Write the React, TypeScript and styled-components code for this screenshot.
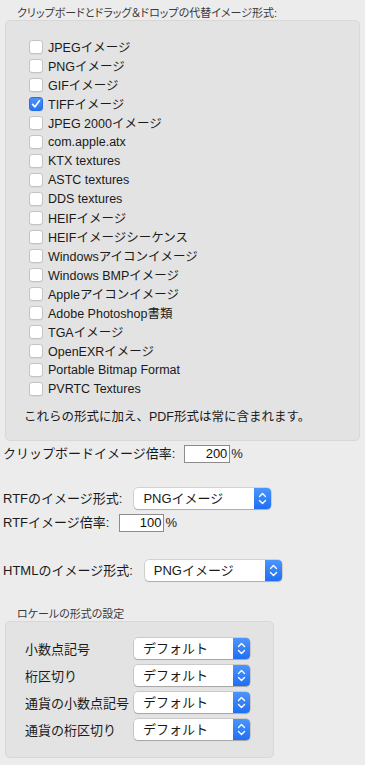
import React from "react";
import styled, { createGlobalStyle } from "styled-components";

const Global = createGlobalStyle`
  html, body { margin: 0; padding: 0; background: #ececec; }
  body { font-family: "Liberation Sans", "Noto Sans CJK JP", sans-serif; color: #1e1e1e; }
`;

const Page = styled.div`
  width: 365px;
  height: 765px;
  box-sizing: border-box;
  padding: 0 5px 0 3px;
  display: flex;
  flex-direction: column;
  background: #ececec;
  overflow: hidden;
`;

const GroupTitle = styled.div<{ $top: number }>`
  font-size: 11px;
  line-height: 14px;
  color: #3a3a3a;
  padding-left: 14px;
  margin-top: ${(p) => p.$top}px;
  font-feature-settings: "palt";
`;

const GroupBox = styled.div<{ $width?: number }>`
  margin-left: 2px;
  width: ${(p) => (p.$width ? `${p.$width}px` : "auto")};
  box-sizing: border-box;
  background: #e3e3e3;
  border: 1px solid #d8d8d8;
  border-radius: 5px;
`;

const FormatBox = styled(GroupBox)`
  padding: 16px 10px 15px 23px;
`;

const CheckList = styled.div`
  display: flex;
  flex-direction: column;
`;

const CheckRow = styled.label`
  display: flex;
  align-items: center;
  gap: 5px;
  height: 19px;
  font-size: 12.5px;
  color: #1a1a1a;
`;

const Box = styled.span<{ $checked: boolean }>`
  width: 14px;
  height: 14px;
  box-sizing: border-box;
  border-radius: 3px;
  display: flex;
  align-items: center;
  justify-content: center;
  background: ${(p) => (p.$checked ? "linear-gradient(#4c93fb, #2b74f1)" : "#fff")};
  border: 1px solid ${(p) => (p.$checked ? "#2a6fe0" : "#c4c4c4")};
  box-shadow: 0 0.5px 0.5px rgba(0, 0, 0, 0.08);
`;

const Note = styled.div`
  margin-top: 11px;
  margin-left: -5px;
  font-size: 12.5px;
  line-height: 16px;
  color: #1a1a1a;
`;

const FieldRow = styled.div<{ $top: number }>`
  display: flex;
  align-items: center;
  margin-top: ${(p) => p.$top}px;
  font-size: 13px;
  line-height: 18px;
  color: #1a1a1a;
`;

const FieldLabel = styled.span<{ $gap: number }>`
  margin-right: ${(p) => p.$gap}px;
  white-space: nowrap;
`;

const NumberBox = styled.div<{ $width: number }>`
  width: ${(p) => p.$width}px;
  height: 18px;
  box-sizing: border-box;
  background: #fff;
  border: 1px solid #8c8c8c;
  font-size: 13px;
  line-height: 16px;
  text-align: right;
  padding-right: 2px;
  color: #111;
`;

const Percent = styled.span`
  margin-left: 1px;
  font-size: 13px;
`;

const Popup = styled.div<{ $width: number }>`
  width: ${(p) => p.$width}px;
  height: 21px;
  box-sizing: border-box;
  display: flex;
  align-items: stretch;
  background: #fff;
  border-radius: 4px;
  box-shadow: 0 0 0 0.5px rgba(0, 0, 0, 0.22), 0 1px 1px rgba(0, 0, 0, 0.18);
  overflow: hidden;
`;

const PopupText = styled.span`
  flex: 1;
  padding-left: 9px;
  font-size: 13px;
  line-height: 21px;
  color: #1a1a1a;
  white-space: nowrap;
`;

const Stepper = styled.span`
  width: 17px;
  display: flex;
  align-items: center;
  justify-content: center;
  background: linear-gradient(#4b95fc, #1f6ff3);
`;

const LocaleBox = styled(GroupBox)`
  padding: 16px 0 17px 19px;
  display: grid;
  grid-template-columns: 109px 116px;
  row-gap: 6px;
  align-items: center;
`;

const LocaleLabel = styled.span`
  font-size: 13px;
  color: #1a1a1a;
  white-space: nowrap;
`;

const Check = () => (
  <svg width="10" height="10" viewBox="0 0 10 10">
    <path d="M1.6 5.4 L4 7.8 L8.4 1.8" fill="none" stroke="#fff" strokeWidth="1.7" strokeLinecap="round" strokeLinejoin="round" />
  </svg>
);

const Chevrons = () => (
  <svg width="9" height="13" viewBox="0 0 9 13">
    <path d="M1.5 4.5 L4.5 1.5 L7.5 4.5" fill="none" stroke="#fff" strokeWidth="1.4" strokeLinecap="round" strokeLinejoin="round" />
    <path d="M1.5 8.5 L4.5 11.5 L7.5 8.5" fill="none" stroke="#fff" strokeWidth="1.4" strokeLinecap="round" strokeLinejoin="round" />
  </svg>
);

const Select = ({ value, width }: { value: string; width: number }) => (
  <Popup $width={width}>
    <PopupText>{value}</PopupText>
    <Stepper>
      <Chevrons />
    </Stepper>
  </Popup>
);

const formats: [string, boolean][] = [
  ["JPEGイメージ", false],
  ["PNGイメージ", false],
  ["GIFイメージ", false],
  ["TIFFイメージ", true],
  ["JPEG 2000イメージ", false],
  ["com.apple.atx", false],
  ["KTX textures", false],
  ["ASTC textures", false],
  ["DDS textures", false],
  ["HEIFイメージ", false],
  ["HEIFイメージシーケンス", false],
  ["Windowsアイコンイメージ", false],
  ["Windows BMPイメージ", false],
  ["Appleアイコンイメージ", false],
  ["Adobe Photoshop書類", false],
  ["TGAイメージ", false],
  ["OpenEXRイメージ", false],
  ["Portable Bitmap Format", false],
  ["PVRTC Textures", false],
];

const locale = ["小数点記号", "桁区切り", "通貨の小数点記号", "通貨の桁区切り"];

export default function App() {
  return (
    <>
      <Global />
      <Page>
        <GroupTitle $top={6}>クリップボードとドラッグ＆ドロップの代替イメージ形式:</GroupTitle>
        <FormatBox>
          <CheckList>
            {formats.map(([name, checked]) => (
              <CheckRow key={name}>
                <Box $checked={checked}>{checked && <Check />}</Box>
                {name}
              </CheckRow>
            ))}
          </CheckList>
          <Note>これらの形式に加え、PDF形式は常に含まれます。</Note>
        </FormatBox>

        <FieldRow $top={4}>
          <FieldLabel $gap={9}>クリップボードイメージ倍率:</FieldLabel>
          <NumberBox $width={46}>200</NumberBox>
          <Percent>%</Percent>
        </FieldRow>

        <FieldRow $top={25}>
          <FieldLabel $gap={12}>RTFのイメージ形式:</FieldLabel>
          <Select value="PNGイメージ" width={137} />
        </FieldRow>

        <FieldRow $top={5}>
          <FieldLabel $gap={10}>RTFイメージ倍率:</FieldLabel>
          <NumberBox $width={45}>100</NumberBox>
          <Percent>%</Percent>
        </FieldRow>

        <FieldRow $top={28}>
          <FieldLabel $gap={12}>HTMLのイメージ形式:</FieldLabel>
          <Select value="PNGイメージ" width={137} />
        </FieldRow>

        <GroupTitle $top={26}>ロケールの形式の設定</GroupTitle>
        <LocaleBox $width={269}>
          {locale.map((l) => (
            <React.Fragment key={l}>
              <LocaleLabel>{l}</LocaleLabel>
              <Select value="デフォルト" width={116} />
            </React.Fragment>
          ))}
        </LocaleBox>
      </Page>
    </>
  );
}
